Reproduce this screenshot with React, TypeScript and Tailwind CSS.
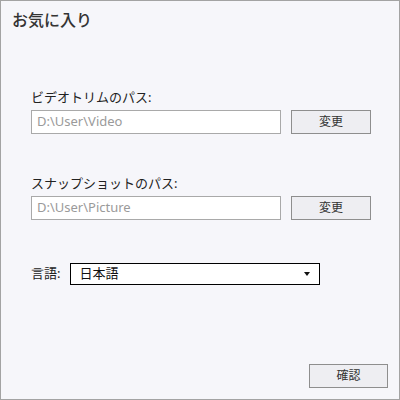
import React from 'react';

const FONT = { fontFamily: '"Noto Sans", "Noto Sans CJK JP", sans-serif' };

function PathField({ label, value }: { label: string; value: string }) {
  return (
    <div className="flex flex-col">
      <div className="text-[13px] leading-[18px] text-[#222] h-[18px]">{label}</div>
      <div className="mt-[4px] flex items-center">
        <div className="w-[250px] h-[24px] bg-white border border-[#a9a9a9] px-[5px] flex items-center text-[13px] text-[#9a9a9a]">
          {value}
        </div>
        <button className="ml-[10px] w-[80px] h-[24px] bg-[#eeeef2] border border-[#8e8e8e] text-[12px] text-[#333]">
          変更
        </button>
      </div>
    </div>
  );
}

export default function App() {
  return (
    <div
      className="w-[400px] h-[400px] bg-[#f6f6fa] border border-[#a3a3a3] flex flex-col"
      style={FONT}
    >
      {/* Header */}
      <div className="pl-[11px] pt-[9px] h-[30px] text-[16px] leading-[20px] font-medium text-[#333]">
        お気に入り
      </div>

      <div className="flex flex-col pl-[30px] mt-[57px]">
        <PathField label="ビデオトリムのパス:" value="D:\User\Video" />
        <div className="h-[40px]" />
        <PathField label="スナップショットのパス:" value="D:\User\Picture" />

        {/* Language */}
        <div className="mt-[43px] flex items-center">
          <span className="text-[13px] text-[#222]">言語:</span>
          <div className="ml-[10px] w-[250px] h-[22px] bg-white border border-black flex items-center justify-between pl-[8px] pr-[9px] text-[13px] text-[#111]">
            <span>日本語</span>
            <svg width="6" height="4" viewBox="0 0 6 4">
              <path d="M0 0 H6 L3 4 Z" fill="#111" />
            </svg>
          </div>
        </div>
      </div>

      <div className="flex-1" />
      <div className="flex justify-end pr-[11px] pb-[11px]">
        <button className="w-[79px] h-[24px] bg-[#eeeef2] border border-[#8e8e8e] text-[12px] text-[#333]">
          確認
        </button>
      </div>
    </div>
  );
}
